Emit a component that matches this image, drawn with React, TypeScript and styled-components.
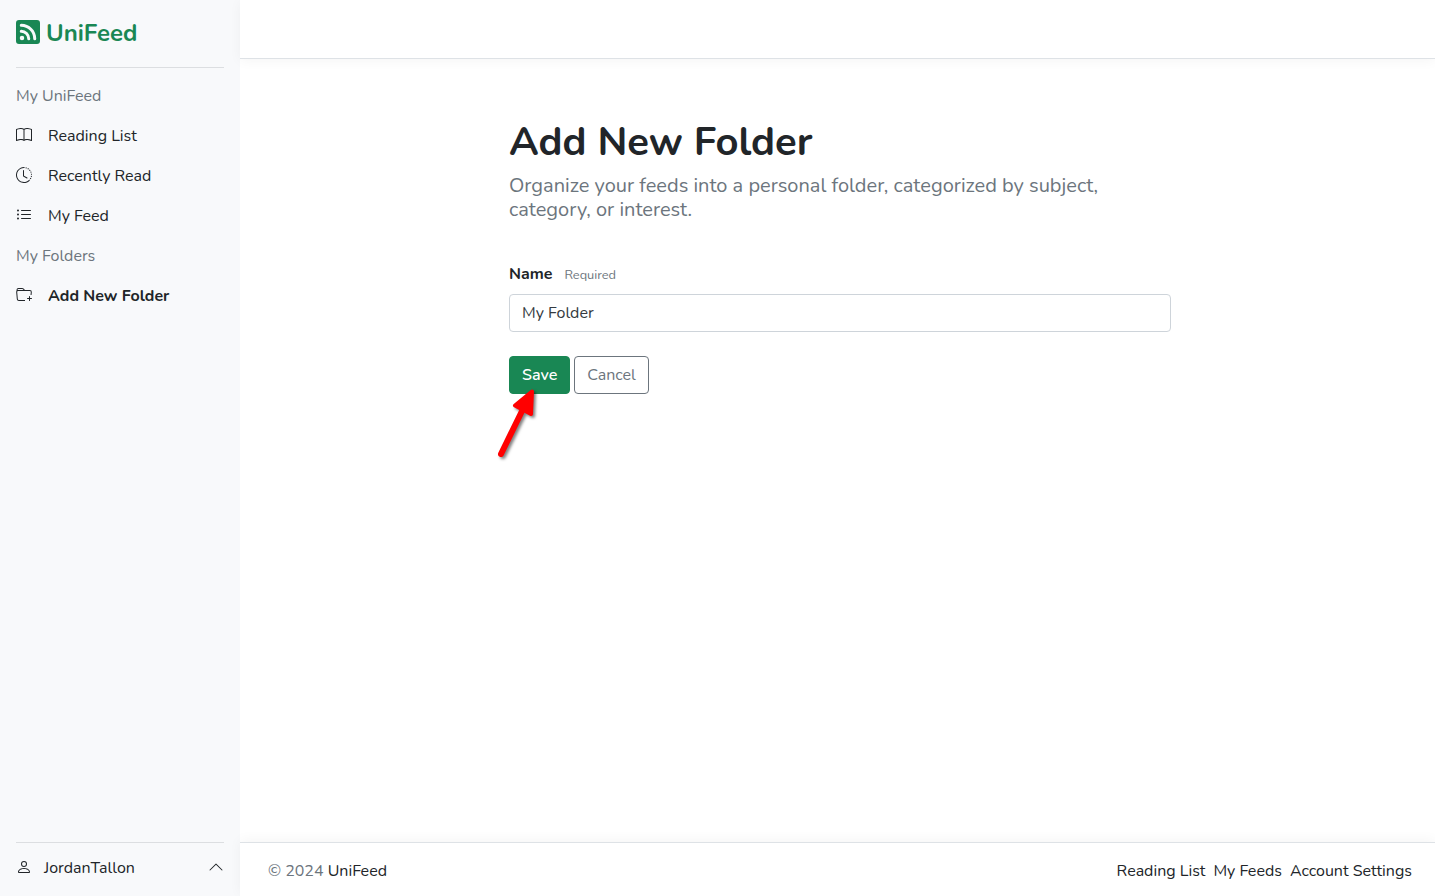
import React from "react";
import styled, { createGlobalStyle } from "styled-components";
import {
  BsRssFill,
  BsBook,
  BsClockHistory,
  BsListUl,
  BsFolderPlus,
  BsPerson,
  BsChevronUp,
} from "react-icons/bs";

const GlobalStyle = createGlobalStyle`
  *, *::before, *::after { box-sizing: border-box; }
  body {
    margin: 0;
    background: #fff;
    color: #212529;
    font: 400 16px/24px Nunito, "Open Sans", sans-serif;
  }
  a { color: inherit; text-decoration: none; }
`;

const Page = styled.div`
  display: grid;
  grid-template-columns: 240px 1fr;
  height: 100vh;
  overflow: hidden;
`;

const Sidebar = styled.aside`
  display: flex;
  flex-direction: column;
  padding: 14px 16px 16px;
  background: #f8f9fb;
`;

const Brand = styled.a`
  display: flex;
  align-items: center;
  gap: 6px;
  height: 36px;
  margin-bottom: 17px;
  color: #198754;
  font-size: 24px;
  font-weight: 700;

  svg { width: 24px; height: 24px; }
`;

const BrandName = styled.span`
  padding-top: 2px;
`;

const Divider = styled.hr`
  width: 100%;
  height: 1px;
  flex: none;
  margin: 0;
  border: 0;
  background: #dcdee1;
`;

const Nav = styled.nav`
  display: flex;
  flex: 1;
  flex-direction: column;
  padding-top: 8px;
`;

const NavHeading = styled.span`
  padding: 8px 0;
  color: #6c757d;
`;

const NavItem = styled.a<{ $active?: boolean }>`
  display: flex;
  align-items: flex-start;
  gap: 16px;
  padding: 8px 0;
  font-weight: ${(p) => (p.$active ? 700 : 400)};

  svg { width: 16px; height: 16px; margin-top: 3px; }
`;

const UserMenu = styled.a`
  display: flex;
  align-items: center;
  gap: 12px;
  padding-top: 13px;

  svg { width: 16px; height: 16px; }
  svg:first-child { margin-top: -2px; }
  svg:last-child { margin-left: auto; margin-top: -2px; }
`;

const Content = styled.div`
  display: flex;
  flex-direction: column;
  min-width: 0;
`;

const TopBar = styled.header`
  height: 59px;
  border-bottom: 1px solid #dee2e6;
  box-shadow: 0 2px 12px rgba(0, 0, 0, 0.045);
`;

const Main = styled.main`
  flex: 1;
  width: 662px;
  margin-top: 59px;
  margin-left: 269px;
`;

const Title = styled.h1`
  margin: 0 0 8px;
  font-size: 40px;
  font-weight: 700;
  line-height: 48px;
`;

const Lead = styled.p`
  margin: 0 0 40px;
  color: #6c757d;
  font-size: 20px;
  line-height: 24px;
`;

const Label = styled.label`
  display: flex;
  align-items: baseline;
  gap: 12px;
  height: 24px;
  margin-bottom: 8px;
  font-weight: 700;
`;

const Hint = styled.span`
  color: #6c757d;
  font-size: 12.8px;
  font-weight: 400;
`;

const Input = styled.input`
  display: block;
  width: 100%;
  height: 38px;
  margin-bottom: 24px;
  padding: 6px 12px;
  border: 1px solid #ced4da;
  border-radius: 4px;
  background: #fff;
  color: #343a40;
  font: inherit;
  outline: 0;
`;

const Actions = styled.div`
  display: flex;
  gap: 4px;
`;

const Button = styled.button<{ $primary?: boolean }>`
  height: 38px;
  padding: 0 12px;
  border: 1px solid ${(p) => (p.$primary ? "#198754" : "#6c757d")};
  border-radius: 4px;
  background: ${(p) => (p.$primary ? "#198754" : "#fff")};
  color: ${(p) => (p.$primary ? "#fff" : "#6c757d")};
  font: inherit;
  font-weight: ${(p) => (p.$primary ? 600 : 400)};
`;

const Footer = styled.footer`
  display: flex;
  justify-content: space-between;
  height: 54px;
  padding: 16px 23px 0 28px;
  border-top: 1px solid #dee2e6;
  box-shadow: 0 -2px 12px rgba(0, 0, 0, 0.045);
`;

const Copyright = styled.span`
  color: #6c757d;

  a { color: #212529; }
`;

const FooterLinks = styled.div`
  display: flex;
  gap: 8px;
`;

const Pointer = styled.svg`
  position: absolute;
  left: 490px;
  top: 380px;
  width: 60px;
  height: 90px;
  pointer-events: none;
  filter: drop-shadow(2px 2px 1.5px rgba(0, 0, 0, 0.5));
`;

const links = [
  { icon: <BsBook />, label: "Reading List" },
  { icon: <BsClockHistory />, label: "Recently Read" },
  { icon: <BsListUl />, label: "My Feed" },
];

export default function App() {
  return (
    <>
      <GlobalStyle />
      <Page>
        <Sidebar>
          <Brand href="#">
            <BsRssFill />
            <BrandName>UniFeed</BrandName>
          </Brand>
          <Divider />
          <Nav>
            <NavHeading>My UniFeed</NavHeading>
            {links.map((l) => (
              <NavItem href="#" key={l.label}>
                {l.icon}
                {l.label}
              </NavItem>
            ))}
            <NavHeading>My Folders</NavHeading>
            <NavItem href="#" $active>
              <BsFolderPlus />
              Add New Folder
            </NavItem>
          </Nav>
          <Divider />
          <UserMenu href="#">
            <BsPerson />
            JordanTallon
            <BsChevronUp />
          </UserMenu>
        </Sidebar>
        <Content>
          <TopBar />
          <Main>
            <Title>Add New Folder</Title>
            <Lead>
              Organize your feeds into a personal folder, categorized by subject, category, or
              interest.
            </Lead>
            <Label htmlFor="name">
              Name <Hint>Required</Hint>
            </Label>
            <Input id="name" defaultValue="My Folder" />
            <Actions>
              <Button $primary>Save</Button>
              <Button>Cancel</Button>
            </Actions>
          </Main>
          <Footer>
            <Copyright>
              © 2024 <a href="#">UniFeed</a>
            </Copyright>
            <FooterLinks>
              <a href="#">Reading List</a>
              <a href="#">My Feeds</a>
              <a href="#">Account Settings</a>
            </FooterLinks>
          </Footer>
        </Content>
      </Page>
      <Pointer viewBox="490 380 60 90" aria-hidden="true">
        <path d="M501 454L523 409" stroke="#f00" strokeWidth="6" strokeLinecap="round" />
        <path
          d="M532 391.5L515 405.5L531 414Z"
          fill="#f00"
          stroke="#f00"
          strokeWidth="4"
          strokeLinejoin="round"
        />
      </Pointer>
    </>
  );
}
